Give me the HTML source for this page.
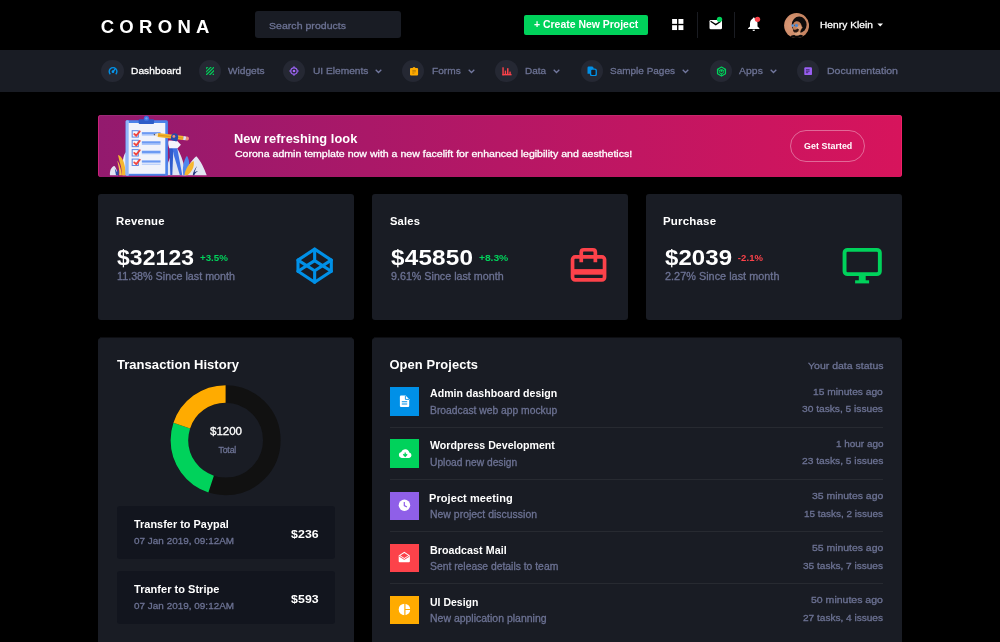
<!DOCTYPE html>
<html lang="en"><head><meta charset="utf-8"><title>Corona Admin</title>
<style>
html,body{margin:0;padding:0}
body{width:1000px;height:642px;overflow:hidden;background:#000;position:relative;font-family:"Liberation Sans",sans-serif;color:#fff}
.a{position:absolute}
.t{position:absolute;white-space:pre;line-height:1;transform-origin:0 0;font-family:"Liberation Sans",sans-serif}
.card{position:absolute;background:#191c24;border-radius:3px}
.nav2{position:absolute;left:0;top:49.5px;width:1000px;height:42.5px;background:#191c24}
.search{position:absolute;left:255px;top:11.3px;width:146px;height:27px;background:#191c24;border-radius:3px}
.btn-new{position:absolute;left:524.4px;top:15px;width:123.4px;height:20.3px;background:#00d25b;border-radius:2px}
.sep{position:absolute;top:12px;width:1px;height:25.5px;background:#1a1c22}
.ic{position:absolute;width:22.4px;height:22.4px;border-radius:50%;background:#252833;top:59.8px}
.banner{position:absolute;left:98px;top:115px;width:804px;height:61.6px;border-radius:3px;background:linear-gradient(90deg,#931a6e 0%,#d7145c 100%);box-shadow:inset 1px 0 0 rgba(220,36,125,.75),inset 0 1px 0 rgba(255,255,255,.07),inset -1px 0 0 rgba(255,40,110,.6)}
.pill{position:absolute;left:790px;top:129.5px;width:73px;height:30.5px;border:1px solid rgba(255,255,255,.36);border-radius:17px}
.trx{position:absolute;left:116.6px;width:218.7px;height:53px;background:#12151e;border-radius:3px}
.sq{position:absolute;left:390px;width:28.8px;height:28.6px}
.hr{position:absolute;left:389.7px;width:493.5px;height:1px;background:#272a31}
#app{position:absolute;left:0;top:0;width:1000px;height:642px;will-change:transform;transform:translateZ(0)}

</style></head>
<body>
<div id="app">
<!-- top navbar -->
<div class="search"></div>
<div class="btn-new"></div>
<div class="sep" style="left:696.5px"></div>
<div class="sep" style="left:734px"></div>
<svg class="a" style="left:672px;top:19px" width="12" height="12" viewBox="0 0 12 12"><g fill="#fff"><rect x="0.1" y="0" width="4.95" height="4.85"/><rect x="6.45" y="0" width="4.95" height="4.85"/><rect x="0.1" y="6.2" width="4.95" height="4.85"/><rect x="6.45" y="6.2" width="4.95" height="4.85"/></g></svg>
<svg class="a" style="left:706px;top:14px" width="20" height="18" viewBox="0 0 20 18"><rect x="3.5" y="5.9" width="12.5" height="9.4" rx="1.4" fill="#fff"/><path d="M4.6 7.2 L9.75 10.6 L14.9 7.2" fill="none" stroke="#000" stroke-width="1.3"/><circle cx="13.5" cy="5.35" r="2.65" fill="#00d25b"/></svg>
<svg class="a" style="left:745px;top:14px" width="20" height="20" viewBox="0 0 20 20"><path d="M8.7 4.2 C6.2 4.9 5 6.8 5 9.4 L5 12.6 L3.1 14.3 L3.1 15 L14.4 15 L14.4 14.3 L12.5 12.6 L12.5 9.4 C12.5 6.8 11.3 4.9 8.8 4.2 Z" fill="#fff"/><circle cx="8.75" cy="4.5" r="1" fill="#fff"/><path d="M7.5 15.7 h2.5 a1.25 1.25 0 0 1 -2.5 0z" fill="#fff"/><circle cx="12.5" cy="5.35" r="2.65" fill="#fc424a"/></svg>
<svg class="a" style="left:783.5px;top:12.5px" width="25.2" height="25.2" viewBox="0 0 25.2 25.2"><defs><clipPath id="av"><circle cx="12.6" cy="12.6" r="12.5"/></clipPath><radialGradient id="avg" cx="0.3" cy="0.5" r="0.8"><stop offset="0" stop-color="#dc9a78"/><stop offset="1" stop-color="#c07e5b"/></radialGradient></defs><g clip-path="url(#av)"><rect width="25.2" height="25.2" fill="url(#avg)"/><ellipse cx="15.2" cy="11.7" rx="7.4" ry="8.2" fill="#0e0b0b"/><path d="M10.6 21.6 L10.9 18 L16.4 17 L16.4 22.4 Z" fill="#d9a07c"/><ellipse cx="13.3" cy="13.7" rx="4.5" ry="5.5" fill="#c48059" transform="rotate(-12 13.3 13.7)"/><path d="M12.8 13.2 L16.4 12 L17.6 15 L15.4 18 L13 17 Z" fill="#d89d77"/><path d="M8.9 16.6 C10.6 17.2 12.4 16.6 13.6 15.4 L15 16.4 C14.6 18.4 12.8 19.8 10.8 19.6 C9.8 19.4 8.9 18.2 8.9 16.6 Z" fill="#2a1912"/><circle cx="8.7" cy="12.6" r="1.35" fill="#5d98da"/><circle cx="12.5" cy="12.4" r="1.55" fill="#4a88d2"/><path d="M10 12.4 H11" stroke="#2b2b33" stroke-width="0.5"/><circle cx="17.6" cy="14.4" r="0.9" fill="#d59570"/><path d="M4.6 25.2 C5.6 22.6 8.6 21.8 10.4 21.9 C12 23.2 14.6 23 16 21.7 C18.6 21.9 20.4 22.8 21 25.2 Z" fill="#0b0a0a"/></g></svg>
<svg class="a" style="left:877px;top:23px" width="7" height="5" viewBox="0 0 7 5"><path d="M0.4 0.6 L6 0.6 L3.2 3.6 Z" fill="#fff"/></svg>

<!-- second nav -->
<div class="nav2"></div>
<div class="ic" style="left:101.3px"></div>
<div class="ic" style="left:199.1px"></div>
<div class="ic" style="left:283px"></div>
<div class="ic" style="left:402px"></div>
<div class="ic" style="left:495.3px"></div>
<div class="ic" style="left:580.8px"></div>
<div class="ic" style="left:709.8px"></div>
<div class="ic" style="left:796.8px"></div>
<svg class="a" style="left:105.5px;top:64px" width="14" height="14" viewBox="0 0 14 14"><path d="M4.33 10.17 A3.85 3.85 0 1 1 9.77 10.17" fill="none" stroke="#0090e7" stroke-width="1.4"/><path d="M7 7.6 L8.9 5.4" stroke="#0a9bf2" stroke-width="1.3" stroke-linecap="round"/><circle cx="6.95" cy="7.65" r="1.3" fill="#0a9bf2"/></svg>
<svg class="a" style="left:205.7px;top:66.9px" width="8.8" height="8.2" viewBox="0 0 8.8 8.2"><g stroke="#00d25b" stroke-width="1.2"><path d="M-1 2.6 L2.8 -1.2"/><path d="M-0.6 5.6 L5.8 -0.8"/><path d="M0.2 8 L8.6 -0.4"/><path d="M3 8.6 L9.2 2.4"/><path d="M6.2 8.8 L9.4 5.6"/></g></svg>
<svg class="a" style="left:288.2px;top:65.1px" width="12" height="12" viewBox="0 0 12 12"><g stroke="#9a63f2" fill="none"><circle cx="6" cy="6" r="3.2" stroke-width="1.25"/><path d="M6 1.2 V2.9 M6 9.1 V10.8 M1.2 6 H2.9 M9.1 6 H10.8" stroke-width="1.2"/></g><circle cx="6" cy="6" r="1.35" fill="#a868fa"/></svg>
<svg class="a" style="left:408.6px;top:65.5px" width="10" height="10.5" viewBox="0 0 10 10.5"><rect x="1" y="1.9" width="8.1" height="7.7" rx="1.1" fill="#ffab00"/><path d="M3.6 2 Q5.05 -0.1 6.5 2 Z" fill="#ffab00"/><path d="M3.3 4.4 H6.9 M3.3 5.8 H6.9 M3.3 7.2 H5.4" stroke="#c07e05" stroke-width="0.95"/></svg>
<svg class="a" style="left:501.5px;top:66.8px" width="10" height="8.8" viewBox="0 0 10 8.8"><g fill="#fc424a"><rect x="0.35" y="0.3" width="1.4" height="8"/><rect x="0.35" y="6.9" width="9.2" height="1.45"/><rect x="2.75" y="3.6" width="1.35" height="4"/><rect x="5" y="1.2" width="1.5" height="6.4"/><rect x="7.35" y="4.6" width="1.4" height="3"/></g></svg>
<svg class="a" style="left:586.5px;top:65.8px" width="10.5" height="10.6" viewBox="0 0 10.5 10.6"><path d="M1.7 0.5 H5.4 L6.6 1.7 V7.8 H0.5 V1.7 Q0.5 0.5 1.7 0.5 Z" fill="#0090e7"/><rect x="3.55" y="3.1" width="5.7" height="6.6" rx="1.5" fill="#191c24" stroke="#0090e7" stroke-width="1.35"/></svg>
<svg class="a" style="left:715.55px;top:65.7px" width="11" height="11" viewBox="0 0 11 11"><g fill="none" stroke="#00d25b"><path d="M5.5 1.05 L9.45 3.3 V7.8 L5.5 10.05 L1.55 7.8 V3.3 Z" stroke-width="1.25" stroke-linejoin="round"/><circle cx="5.5" cy="5.6" r="2.1" stroke-width="0.9"/><path d="M5.5 7.4 V9.6 M3.8 4.6 L2 3.6 M7.2 4.6 L9 3.6" stroke-width="0.8"/></g><circle cx="5.5" cy="4.9" r="1.05" fill="#00d25b"/></svg>
<svg class="a" style="left:804.3px;top:66.8px" width="8.4" height="8.6" viewBox="0 0 8.4 8.6"><rect x="0.3" y="0.3" width="7.7" height="7.9" rx="1.1" fill="#9a5ff3"/><path d="M1.9 2.75 H5.6 M1.9 4.2 H5.6 M1.9 5.7 H4.2" stroke="#3b2a66" stroke-width="0.95"/></svg>
<svg class="a" style="left:374.5px;top:69px" width="7" height="5" viewBox="0 0 7 5"><path d="M0.7 0.7 L3.5 3.5 L6.3 0.7" fill="none" stroke="#7379a0" stroke-width="1.3"/></svg>
<svg class="a" style="left:467.5px;top:69px" width="7" height="5" viewBox="0 0 7 5"><path d="M0.7 0.7 L3.5 3.5 L6.3 0.7" fill="none" stroke="#7379a0" stroke-width="1.3"/></svg>
<svg class="a" style="left:553px;top:69px" width="7" height="5" viewBox="0 0 7 5"><path d="M0.7 0.7 L3.5 3.5 L6.3 0.7" fill="none" stroke="#7379a0" stroke-width="1.3"/></svg>
<svg class="a" style="left:682px;top:69px" width="7" height="5" viewBox="0 0 7 5"><path d="M0.7 0.7 L3.5 3.5 L6.3 0.7" fill="none" stroke="#7379a0" stroke-width="1.3"/></svg>
<svg class="a" style="left:769.5px;top:69px" width="7" height="5" viewBox="0 0 7 5"><path d="M0.7 0.7 L3.5 3.5 L6.3 0.7" fill="none" stroke="#7379a0" stroke-width="1.3"/></svg>

<!-- banner -->
<div class="banner"></div>
<div class="pill"></div>
<svg class="a" style="left:105px;top:112px" width="110" height="68" viewBox="0 0 110 68"><defs><clipPath id="bn"><rect x="-7" y="3" width="117" height="61.6"/></clipPath></defs><g clip-path="url(#bn)"><g transform="scale(0.11)">
<!-- back foliage -->
<path d="M45 575 C40 530 60 495 85 490 C100 500 112 540 118 575 Z" fill="#e3e7f4"/>
<path d="M160 575 C150 470 165 390 190 365 L215 380 L215 575 Z" fill="#e9ecf7"/>
<path d="M118 392 C150 400 185 450 188 575 L150 575 C160 520 135 470 118 392 Z" fill="#f6b730"/>
<path d="M112 440 C130 470 150 520 152 575 L128 575 C138 540 120 490 112 440 Z" fill="#f9c64e"/>
<path d="M88 512 L108 545 L126 520 L122 575 L100 575 Z" fill="#2c4ea6"/>
<path d="M545 575 C560 470 610 350 655 330 C690 380 720 470 735 575 Z" fill="#dfe4f2"/>
<path d="M700 575 C740 520 790 430 830 402 C870 440 905 520 925 575 Z" fill="#e2e6f3"/>
<path d="M745 398 C775 440 770 520 740 575 L712 575 C700 510 715 440 745 398 Z" fill="#4f86ec"/>
<path d="M806 446 C815 500 790 545 748 575 L722 575 C730 520 760 470 806 446 Z" fill="#f6b730"/>
<path d="M835 490 C815 520 800 545 798 575 L812 575 C815 555 840 545 848 535 C830 540 820 545 815 548 C820 525 830 508 835 490 Z" fill="#22367e"/>
<!-- clipboard -->
<rect x="188" y="75" width="384" height="505" rx="14" fill="#4c83ea"/>
<rect x="188" y="75" width="30" height="505" rx="12" fill="#8fb6f9"/>
<rect x="215" y="100" width="333" height="462" fill="#f1f3fb"/>
<rect x="306" y="66" width="140" height="42" rx="8" fill="#2d5cc9"/>
<circle cx="377" cy="58" r="24" fill="#3b6fdd"/><circle cx="377" cy="58" r="11" fill="#6f9df3"/>
<!-- rows -->
<g fill="#f7f8fd" stroke="#5b85e2" stroke-width="9"><rect x="247" y="170" width="56" height="58"/><rect x="247" y="257" width="56" height="58"/><rect x="247" y="342" width="56" height="58"/><rect x="247" y="428" width="56" height="58"/></g>
<g fill="#6c9af3"><rect x="335" y="183" width="170" height="22"/><rect x="335" y="266" width="170" height="22"/><rect x="335" y="352" width="170" height="22"/><rect x="335" y="440" width="170" height="20"/></g>
<g fill="#a9c5fa"><rect x="335" y="205" width="170" height="10"/><rect x="335" y="288" width="170" height="12"/><rect x="335" y="374" width="170" height="10"/><rect x="335" y="470" width="170" height="9"/></g>
<g fill="none" stroke="#f2453f" stroke-width="17" stroke-linecap="round" stroke-linejoin="round"><path d="M266 200 L284 216 L316 176"/><path d="M266 287 L284 303 L316 263"/><path d="M266 372 L284 388 L316 348"/><path d="M266 458 L284 474 L316 434"/></g>
<!-- person -->
<path d="M585 325 L622 325 L612 572 L594 572 Z" fill="#2f5bcb"/>
<path d="M612 325 L656 325 L702 572 L680 572 L628 400 Z" fill="#3f71e3"/>
<path d="M578 258 L655 262 L690 298 L660 330 L584 330 C575 305 572 280 578 258 Z" fill="#f5f6fc"/>
<!-- pencil -->
<g transform="rotate(6.7 440 205)"><path d="M440 205 L482 187 L482 223 Z" fill="#f3e2c4"/><path d="M440 205 L455 198.500 L455 211.500 Z" fill="#3a3a4a"/><rect x="482" y="187" width="232" height="36" fill="#f2b531"/><rect x="482" y="199" width="232" height="12" fill="#e09a1d"/><rect x="714" y="187" width="24" height="36" fill="#dfe5f3"/><path d="M738 187 H748 A18 18 0 0 1 748 223 H738 Z" fill="#f08c7c"/></g>
<path d="M600 232 C598 200 630 182 652 198 C672 212 668 250 650 268 L622 262 L596 252 Z" fill="#264aa8"/>
<circle cx="626" cy="222" r="13" fill="#f0907c"/>
</g></g></svg>

<!-- stat cards -->
<div class="card" style="left:98px;top:194px;width:256px;height:126px"></div>
<div class="card" style="left:372px;top:194px;width:256px;height:126px"></div>
<div class="card" style="left:646px;top:194px;width:256px;height:126px"></div>
<svg class="a" style="left:294px;top:245px" width="42" height="42" viewBox="0 0 42 42"><g fill="none" stroke="#0090e7" stroke-width="3.1" stroke-linejoin="round" stroke-linecap="round"><path d="M20.65 4.1 L37.3 15.1 V26.3 L20.65 37.3 L4 26.3 V15.1 Z"/><path d="M20.65 4.1 V15.6 M20.65 25.8 V37.3 M4 15.1 L20.65 25.8 L37.3 15.1 M4 26.3 L20.65 15.6 L37.3 26.3"/></g></svg>
<svg class="a" style="left:568px;top:245px" width="42" height="40" viewBox="0 0 42 40"><g fill="none" stroke="#fc424a" stroke-width="3.7"><rect x="4.55" y="11.95" width="32" height="22.9" rx="2.6"/><path d="M13.25 17.2 V7.2 Q13.25 4.75 15.7 4.75 H24.9 Q27.35 4.75 27.35 7.2 V17.2" /></g><rect x="4" y="24.1" width="33" height="5.6" fill="#fc424a"/></svg>
<svg class="a" style="left:840px;top:245px" width="44" height="40" viewBox="0 0 44 40"><rect x="4.55" y="4.85" width="35.3" height="24.3" rx="3" fill="none" stroke="#00d25b" stroke-width="3.9"/><rect x="18.8" y="30" width="6.9" height="6" fill="#00d25b"/><rect x="15.1" y="35.3" width="14" height="3.1" fill="#00d25b"/></svg>

<!-- transaction history -->
<div class="card" style="left:98px;top:338px;width:256px;height:320px"></div>
<div class="a" style="left:100px;top:337px;width:252px;height:1px;background:rgba(25,28,36,.5)"></div>
<svg class="a" style="left:165px;top:380px" width="122" height="122" viewBox="0 0 122 122"><g transform="translate(60.6 60.2)" fill="none" stroke-width="17.6"><circle r="46.2" stroke="#111111"/><circle r="46.2" stroke="#00d25b" stroke-dasharray="72.57 1000" stroke-dashoffset="-159.66" transform="rotate(-90)"/><circle r="46.2" stroke="#ffab00" stroke-dasharray="58.06 1000" stroke-dashoffset="-232.23" transform="rotate(-90)"/></g></svg>

<div class="trx" style="top:506.3px"></div>
<div class="trx" style="top:571.3px"></div>
<!-- open projects -->
<div class="card" style="left:372px;top:338px;width:530px;height:320px"></div>
<div class="a" style="left:374px;top:337px;width:526px;height:1px;background:rgba(25,28,36,.5)"></div>
<div class="sq" style="top:387.3px;background:#0090e7"></div>
<div class="sq" style="top:439.4px;background:#00d25b"></div>
<div class="sq" style="top:491.5px;background:#8f5fe8"></div>
<div class="sq" style="top:543.6px;background:#fc424a"></div>
<div class="sq" style="top:595.7px;background:#ffab00"></div>
<div class="hr" style="top:427.0px"></div>
<div class="hr" style="top:479.1px"></div>
<div class="hr" style="top:531.2px"></div>
<div class="hr" style="top:583.4px"></div>
<svg class="a" style="left:399px;top:394.5px" width="11" height="13" viewBox="0 0 11 13"><path d="M2 0.6 H6.6 L10.2 4.2 V11 Q10.2 12.1 9.1 12.1 H2 Q0.9 12.1 0.9 11 V1.7 Q0.9 0.6 2 0.6 Z" fill="#fff"/><path d="M6.4 0.9 V4.4 H10" fill="none" stroke="#0090e7" stroke-width="0.9"/><path d="M2.8 6.7 H8.2 M2.8 9 H8.2" stroke="#0090e7" stroke-width="1.1"/></svg>
<svg class="a" style="left:397.5px;top:448.9px" width="14.5" height="9.5" viewBox="0 0 14.5 9.5"><path d="M3.6 9 A3.1 3.1 0 0 1 3.2 2.9 A4.3 4.3 0 0 1 11.3 3.6 A2.75 2.75 0 0 1 11.2 9 Z" fill="#fff"/><path d="M7.2 3.4 V6.2 M5.3 5.2 L7.2 7.3 L9.1 5.2" fill="none" stroke="#00d25b" stroke-width="1.3"/></svg>
<svg class="a" style="left:398px;top:499.2px" width="13" height="13" viewBox="0 0 13 13"><circle cx="6.45" cy="6.3" r="5.75" fill="#fff"/><path d="M6.3 3 V6.6 L8.9 8.1" fill="none" stroke="#8f5fe8" stroke-width="1.2"/></svg>
<svg class="a" style="left:398.4px;top:551.1px" width="13" height="12" viewBox="0 0 13 12"><path d="M0.7 4.4 L6.3 0.7 L11.9 4.4 V10.2 Q11.9 11.2 10.9 11.2 H1.7 Q0.7 11.2 0.7 10.2 Z" fill="#fff"/><path d="M2.3 4.5 L6.3 2 L10.3 4.5 L6.3 7 Z" fill="#fc424a"/><path d="M1.2 5.2 L6.3 8.4 L11.4 5.2" fill="none" stroke="#fc424a" stroke-width="0.9"/></svg>
<svg class="a" style="left:398px;top:603.4px" width="13" height="13" viewBox="0 0 13 13"><circle cx="6.45" cy="6.4" r="5.75" fill="#fff"/><path d="M6.9 0 V13 M6.9 6.5 H13" stroke="#ffab00" stroke-width="1.2"/></svg>

<header>
<span class="t" style="left:100.67px;top:18px;font-size:18.5px;letter-spacing:5.321px;color:#fff;font-weight:700;">CORONA</span>
<span class="t" style="left:269.14px;top:21px;font-size:9.6px;letter-spacing:0.031px;color:#6c7293;transform:scaleX(1.096);-webkit-text-stroke:0.3px #6c7293;">Search products</span>
<span class="t" style="left:534.20px;top:20px;font-size:10px;letter-spacing:-0.008px;color:#fff;transform:scaleX(1.046);font-weight:700;">+ Create New Project</span>
<span class="t" style="left:820.29px;top:20px;font-size:9.8px;letter-spacing:0.062px;color:#fff;transform:scaleX(1.031);-webkit-text-stroke:0.3px #fff;">Henry Klein</span>
</header>
<nav>
<span class="t" style="left:131.22px;top:66px;font-size:9.7px;letter-spacing:0.067px;color:#fff;transform:scaleX(1.048);-webkit-text-stroke:0.3px #fff;">Dashboard</span>
<span class="t" style="left:227.82px;top:66px;font-size:9.7px;letter-spacing:0.000px;color:#6c7293;transform:scaleX(1.046);-webkit-text-stroke:0.3px #6c7293;">Widgets</span>
<span class="t" style="left:312.82px;top:66px;font-size:9.7px;letter-spacing:-0.000px;color:#6c7293;transform:scaleX(1.050);-webkit-text-stroke:0.3px #6c7293;">UI Elements</span>
<span class="t" style="left:432.22px;top:66px;font-size:9.7px;letter-spacing:0.038px;color:#6c7293;transform:scaleX(1.042);-webkit-text-stroke:0.3px #6c7293;">Forms</span>
<span class="t" style="left:525.22px;top:66px;font-size:9.7px;letter-spacing:0.000px;color:#6c7293;transform:scaleX(1.026);-webkit-text-stroke:0.3px #6c7293;">Data</span>
<span class="t" style="left:610.22px;top:66px;font-size:9.7px;letter-spacing:0.000px;color:#6c7293;transform:scaleX(1.031);-webkit-text-stroke:0.3px #6c7293;">Sample Pages</span>
<span class="t" style="left:739.22px;top:66px;font-size:9.7px;letter-spacing:0.125px;color:#6c7293;transform:scaleX(1.064);-webkit-text-stroke:0.3px #6c7293;">Apps</span>
<span class="t" style="left:827.22px;top:66px;font-size:9.7px;letter-spacing:0.000px;color:#6c7293;transform:scaleX(1.089);-webkit-text-stroke:0.3px #6c7293;">Documentation</span>
</nav>
<section>
<span class="t" style="left:234.00px;top:133px;font-size:12.3px;letter-spacing:0.043px;color:#fff;transform:scaleX(1.042);font-weight:700;">New refreshing look</span>
<span class="t" style="left:235.03px;top:149px;font-size:9.8px;letter-spacing:0.001px;color:#fff;transform:scaleX(1.077);-webkit-text-stroke:0.3px #fff;">Corona admin template now with a new facelift for enhanced legibility and aesthetics!</span>
<span class="t" style="left:803.73px;top:142px;font-size:8.8px;letter-spacing:0.056px;color:#fff;transform:scaleX(1.006);font-weight:700;">Get Started</span>
</section>
<section>
<span class="t" style="left:115.63px;top:216px;font-size:10.9px;letter-spacing:0.179px;color:#fff;transform:scaleX(1.044);font-weight:700;">Revenue</span>
<span class="t" style="left:117.06px;top:248px;font-size:21.4px;letter-spacing:0.120px;color:#fff;transform:scaleX(1.070);font-weight:700;">$32123</span>
<span class="t" style="left:199.87px;top:253px;font-size:9.5px;letter-spacing:-0.020px;color:#00d25b;transform:scaleX(1.026);font-weight:700;">+3.5%</span>
<span class="t" style="left:117.02px;top:272px;font-size:10px;letter-spacing:0.000px;color:#6c7293;transform:scaleX(1.074);-webkit-text-stroke:0.3px #6c7293;">11.38% Since last month</span>
<span class="t" style="left:390.23px;top:216px;font-size:10.9px;letter-spacing:0.156px;color:#fff;transform:scaleX(1.026);font-weight:700;">Sales</span>
<span class="t" style="left:390.78px;top:248px;font-size:21.4px;letter-spacing:0.155px;color:#fff;transform:scaleX(1.136);font-weight:700;">$45850</span>
<span class="t" style="left:478.51px;top:253px;font-size:9.5px;letter-spacing:-0.074px;color:#00d25b;transform:scaleX(1.088);font-weight:700;">+8.3%</span>
<span class="t" style="left:390.50px;top:272px;font-size:10px;letter-spacing:0.000px;color:#6c7293;transform:scaleX(1.072);-webkit-text-stroke:0.3px #6c7293;">9.61% Since last month</span>
<span class="t" style="left:663.27px;top:216px;font-size:10.9px;letter-spacing:0.184px;color:#fff;transform:scaleX(1.054);font-weight:700;">Purchase</span>
<span class="t" style="left:664.54px;top:248px;font-size:21.4px;letter-spacing:0.071px;color:#fff;transform:scaleX(1.121);font-weight:700;">$2039</span>
<span class="t" style="left:737.79px;top:253px;font-size:9.5px;letter-spacing:0.108px;color:#fc424a;font-weight:700;">-2.1%</span>
<span class="t" style="left:664.66px;top:272px;font-size:10px;letter-spacing:0.028px;color:#6c7293;transform:scaleX(1.083);-webkit-text-stroke:0.3px #6c7293;">2.27% Since last month</span>
</section>
<section>
<span class="t" style="left:116.85px;top:359px;font-size:12.9px;letter-spacing:0.026px;color:#fff;transform:scaleX(1.010);font-weight:700;">Transaction History</span>
<span class="t" style="left:210.06px;top:425px;font-size:11.6px;letter-spacing:-0.073px;color:#fff;-webkit-text-stroke:0.3px #fff;">$1200</span>
<span class="t" style="left:218.46px;top:446px;font-size:8.7px;letter-spacing:-0.135px;color:#6c7293;-webkit-text-stroke:0.3px #6c7293;">Total</span>
<span class="t" style="left:134.16px;top:519px;font-size:10.6px;letter-spacing:0.046px;color:#fff;transform:scaleX(1.023);font-weight:700;">Transfer to Paypal</span>
<span class="t" style="left:134.21px;top:536px;font-size:9.8px;letter-spacing:0.025px;color:#6c7293;transform:scaleX(1.010);-webkit-text-stroke:0.3px #6c7293;">07 Jan 2019, 09:12AM</span>
<span class="t" style="left:291.13px;top:529px;font-size:11.2px;letter-spacing:0.097px;color:#fff;transform:scaleX(1.101);font-weight:700;">$236</span>
<span class="t" style="left:134.16px;top:584px;font-size:10.6px;letter-spacing:0.010px;color:#fff;transform:scaleX(1.041);font-weight:700;">Tranfer to Stripe</span>
<span class="t" style="left:134.21px;top:601px;font-size:9.8px;letter-spacing:0.025px;color:#6c7293;transform:scaleX(1.010);-webkit-text-stroke:0.3px #6c7293;">07 Jan 2019, 09:12AM</span>
<span class="t" style="left:291.13px;top:594px;font-size:11.2px;letter-spacing:0.097px;color:#fff;transform:scaleX(1.101);font-weight:700;">$593</span>
</section>
<section>
<span class="t" style="left:389.41px;top:359px;font-size:12.9px;letter-spacing:0.100px;color:#fff;font-weight:700;">Open Projects</span>
<span class="t" style="left:808.05px;top:361px;font-size:9.5px;letter-spacing:0.015px;color:#6c7293;transform:scaleX(1.102);-webkit-text-stroke:0.3px #6c7293;">Your data status</span>
<span class="t" style="left:430.00px;top:389px;font-size:10.4px;letter-spacing:0.026px;color:#fff;transform:scaleX(1.016);font-weight:700;">Admin dashboard design</span>
<span class="t" style="left:429.93px;top:406px;font-size:10.2px;letter-spacing:-0.007px;color:#6c7293;transform:scaleX(1.013);-webkit-text-stroke:0.3px #6c7293;">Broadcast web app mockup</span>
<span class="t" style="left:812.84px;top:388px;font-size:9.3px;letter-spacing:0.000px;color:#6c7293;transform:scaleX(1.098);-webkit-text-stroke:0.3px #6c7293;">15 minutes ago</span>
<span class="t" style="left:801.98px;top:404px;font-size:9.4px;letter-spacing:-0.017px;color:#6c7293;transform:scaleX(1.091);-webkit-text-stroke:0.3px #6c7293;">30 tasks, 5 issues</span>
<span class="t" style="left:430.00px;top:441px;font-size:10.4px;letter-spacing:-0.004px;color:#fff;transform:scaleX(1.022);font-weight:700;">Wordpress Development</span>
<span class="t" style="left:430.01px;top:458px;font-size:10.2px;letter-spacing:0.005px;color:#6c7293;transform:scaleX(1.005);-webkit-text-stroke:0.3px #6c7293;">Upload new design</span>
<span class="t" style="left:835.78px;top:440px;font-size:9.3px;letter-spacing:0.000px;color:#6c7293;transform:scaleX(1.068);-webkit-text-stroke:0.3px #6c7293;">1 hour ago</span>
<span class="t" style="left:802.24px;top:456px;font-size:9.4px;letter-spacing:0.009px;color:#6c7293;transform:scaleX(1.090);-webkit-text-stroke:0.3px #6c7293;">23 tasks, 5 issues</span>
<span class="t" style="left:429.20px;top:494px;font-size:10.4px;letter-spacing:0.081px;color:#fff;transform:scaleX(1.058);font-weight:700;">Project meeting</span>
<span class="t" style="left:429.93px;top:510px;font-size:10.2px;letter-spacing:0.015px;color:#6c7293;transform:scaleX(1.024);-webkit-text-stroke:0.3px #6c7293;">New project discussion</span>
<span class="t" style="left:811.72px;top:492px;font-size:9.3px;letter-spacing:-0.011px;color:#6c7293;transform:scaleX(1.123);-webkit-text-stroke:0.3px #6c7293;">35 minutes ago</span>
<span class="t" style="left:803.64px;top:509px;font-size:9.4px;letter-spacing:0.000px;color:#6c7293;transform:scaleX(1.060);-webkit-text-stroke:0.3px #6c7293;">15 tasks, 2 issues</span>
<span class="t" style="left:430.00px;top:546px;font-size:10.4px;letter-spacing:0.054px;color:#fff;transform:scaleX(1.027);font-weight:700;">Broadcast Mail</span>
<span class="t" style="left:429.93px;top:562px;font-size:10.2px;letter-spacing:-0.006px;color:#6c7293;transform:scaleX(1.017);-webkit-text-stroke:0.3px #6c7293;">Sent release details to team</span>
<span class="t" style="left:811.72px;top:544px;font-size:9.3px;letter-spacing:-0.011px;color:#6c7293;transform:scaleX(1.123);-webkit-text-stroke:0.3px #6c7293;">55 minutes ago</span>
<span class="t" style="left:802.98px;top:561px;font-size:9.4px;letter-spacing:-0.017px;color:#6c7293;transform:scaleX(1.078);-webkit-text-stroke:0.3px #6c7293;">35 tasks, 7 issues</span>
<span class="t" style="left:430.00px;top:598px;font-size:10.4px;letter-spacing:0.020px;color:#fff;transform:scaleX(1.006);font-weight:700;">UI Design</span>
<span class="t" style="left:430.01px;top:614px;font-size:10.2px;letter-spacing:0.010px;color:#6c7293;transform:scaleX(1.027);-webkit-text-stroke:0.3px #6c7293;">New application planning</span>
<span class="t" style="left:810.74px;top:596px;font-size:9.3px;letter-spacing:0.000px;color:#6c7293;transform:scaleX(1.131);-webkit-text-stroke:0.3px #6c7293;">50 minutes ago</span>
<span class="t" style="left:802.98px;top:613px;font-size:9.4px;letter-spacing:-0.017px;color:#6c7293;transform:scaleX(1.078);-webkit-text-stroke:0.3px #6c7293;">27 tasks, 4 issues</span>
</section>

</div>
</body></html>
